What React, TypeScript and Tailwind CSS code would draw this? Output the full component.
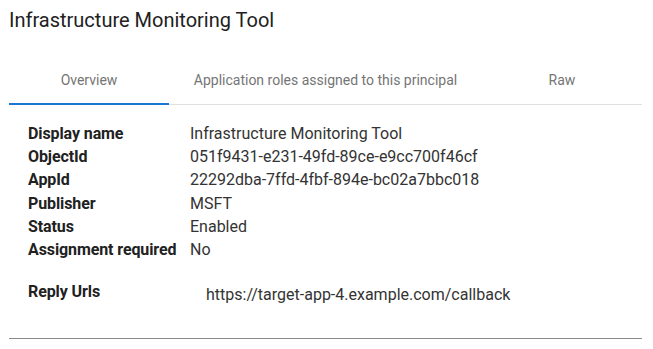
import React from 'react';

const rows: [string, string][] = [
  ['Display name', 'Infrastructure Monitoring Tool'],
  ['ObjectId', '051f9431-e231-49fd-89ce-e9cc700f46cf'],
  ['AppId', '22292dba-7ffd-4fbf-894e-bc02a7bbc018'],
  ['Publisher', 'MSFT'],
  ['Status', 'Enabled'],
  ['Assignment required', 'No'],
];

export default function App() {
  return (
    <div className="w-[653px] h-[349px] bg-white pl-[9px] pr-[11px] font-['Roboto',sans-serif] overflow-hidden">
      {/* Title */}
      <h1 className="pt-[8px] text-[20px] leading-[24px] text-[#212121]">Infrastructure Monitoring Tool</h1>

      {/* Tabs */}
      <div className="mt-[24px] flex border-b border-[#e0e0e0] h-[49px]">
        <div className="relative w-[160px] flex items-center justify-center text-[14px] text-[#757575]">
          Overview
          <div className="absolute left-0 right-0 bottom-[-1px] h-[2px] bg-[#1976d2]" />
        </div>
        <div className="w-[313px] flex items-center justify-center text-[14px] text-[#757575]">
          Application roles assigned to this principal
        </div>
        <div className="w-[160px] flex items-center justify-center text-[14px] text-[#757575]">Raw</div>
      </div>

      {/* Details */}
      <div className="pl-[19px] pt-[17px]">
        {rows.map(([k, v]) => (
          <div key={k} className="flex h-[23.3px] items-center text-[16px]">
            <span className="w-[162px] font-bold text-[#212121] tracking-[-0.1px]">{k}</span>
            <span className="text-[#333]">{v}</span>
          </div>
        ))}
        <div className="flex mt-[18px] text-[16px]">
          <span className="w-[178px] font-bold text-[#212121] tracking-[-0.1px]">Reply Urls</span>
          <span className="text-[#333] pt-[3px]">https://target-app-4.example.com/callback</span>
        </div>
      </div>

      <div className="mt-[31px] h-px bg-[#8a8a8a]" />
    </div>
  );
}
